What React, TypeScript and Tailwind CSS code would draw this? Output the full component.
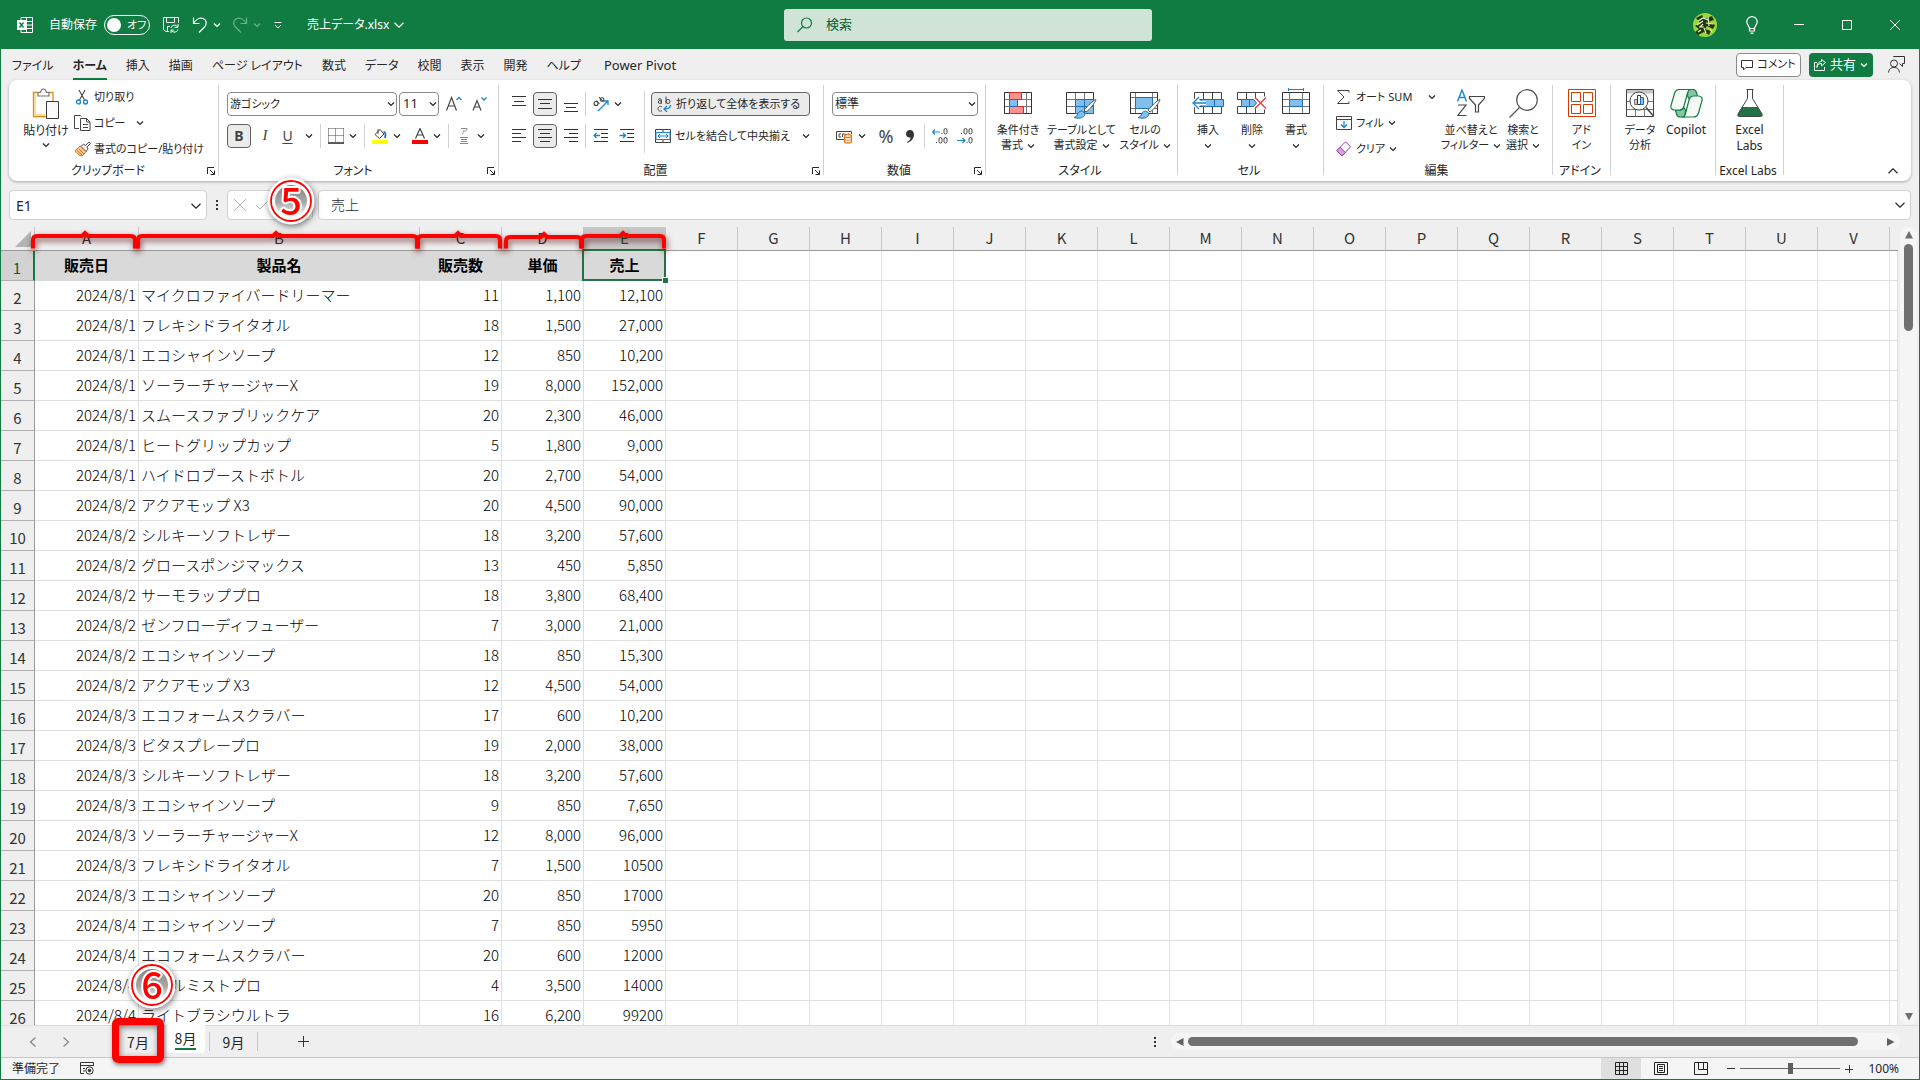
import React from "react";
import clsx from "clsx";

type Row = [string, string, string, string, string];

const ROWS: Row[] = [
  ["2024/8/1", "マイクロファイバードリーマー", "11", "1,100", "12,100"],
  ["2024/8/1", "フレキシドライタオル", "18", "1,500", "27,000"],
  ["2024/8/1", "エコシャインソープ", "12", "850", "10,200"],
  ["2024/8/1", "ソーラーチャージャーX", "19", "8,000", "152,000"],
  ["2024/8/1", "スムースファブリックケア", "20", "2,300", "46,000"],
  ["2024/8/1", "ヒートグリップカップ", "5", "1,800", "9,000"],
  ["2024/8/1", "ハイドロブーストボトル", "20", "2,700", "54,000"],
  ["2024/8/2", "アクアモップ X3", "20", "4,500", "90,000"],
  ["2024/8/2", "シルキーソフトレザー", "18", "3,200", "57,600"],
  ["2024/8/2", "グロースポンジマックス", "13", "450", "5,850"],
  ["2024/8/2", "サーモラッププロ", "18", "3,800", "68,400"],
  ["2024/8/2", "ゼンフローディフューザー", "7", "3,000", "21,000"],
  ["2024/8/2", "エコシャインソープ", "18", "850", "15,300"],
  ["2024/8/2", "アクアモップ X3", "12", "4,500", "54,000"],
  ["2024/8/3", "エコフォームスクラバー", "17", "600", "10,200"],
  ["2024/8/3", "ビタスプレープロ", "19", "2,000", "38,000"],
  ["2024/8/3", "シルキーソフトレザー", "18", "3,200", "57,600"],
  ["2024/8/3", "エコシャインソープ", "9", "850", "7,650"],
  ["2024/8/3", "ソーラーチャージャーX", "12", "8,000", "96,000"],
  ["2024/8/3", "フレキシドライタオル", "7", "1,500", "10500"],
  ["2024/8/3", "エコシャインソープ", "20", "850", "17000"],
  ["2024/8/4", "エコシャインソープ", "7", "850", "5950"],
  ["2024/8/4", "エコフォームスクラバー", "20", "600", "12000"],
  ["2024/8/4", "クールミストプロ", "4", "3,500", "14000"],
  ["2024/8/4", "ライトブラシウルトラ", "16", "6,200", "99200"],
];

const HEADINGS = ["販売日", "製品名", "販売数", "単価", "売上"];
const DATA_COLS = ["A", "B", "C", "D", "E"];
const EMPTY_COLS = "FGHIJKLMNOPQRSTUV".split("");
const MENU = ["ファイル", "ホーム", "挿入", "描画", "ページ レイアウト", "数式", "データ", "校閲", "表示", "開発", "ヘルプ"];

/* ---------- small parts ---------- */

const Chevron = ({ className = "w-2", up = false }: { className?: string; up?: boolean }) => (
  <svg viewBox="0 0 8 8" className={clsx("shrink-0", className)} fill="none" stroke="currentColor" strokeWidth="1.2">
    <path d={up ? "M1 5.5 4 2.5 7 5.5" : "M1 2.5 4 5.5 7 2.5"} vectorEffect="non-scaling-stroke" />
  </svg>
);

const Drop = ({ label }: { label: string }) => (
  <button aria-label={label} className="flex w-[18px] items-center justify-center self-stretch">
    <Chevron />
  </button>
);

const Tool = ({ label, on, wide, children }: { label: string; on?: boolean; wide?: boolean; children: React.ReactNode }) => (
  <button
    aria-label={label}
    className={clsx(
      "flex h-6 shrink-0 items-center justify-center",
      wide ? "w-6" : "w-[17px]",
      on && "rounded border border-[#616161] bg-[#ebebeb]"
    )}
  >
    {children}
  </button>
);

const Sep = () => <span className="mr-[6px] ml-[2px] h-6 w-px shrink-0 bg-[#d1d1d1]" />;

const Launcher = () => (
  <button aria-label="ダイアログを表示" className="h-2 w-2">
    <svg viewBox="0 0 8 8" className="size-2" fill="none" stroke="#262626">
      <path d="M.5 7V.5H7M3 3l4 4M7.5 3.5v4h-4" />
    </svg>
  </button>
);

const Group = ({ title, width, launcher, children }: { title: string; width: string; launcher?: boolean; children: React.ReactNode }) => (
  <>
    <section className={clsx("flex shrink-0 flex-col", width)}>
      <div className="flex h-[83px] text-[11px]">{children}</div>
      <div className="flex h-4 items-center pr-[3px]">
        <span className="flex-1 text-center leading-4 whitespace-nowrap">{title}</span>
        {launcher && <Launcher />}
      </div>
    </section>
    <span className="mt-[5px] h-[90px] w-px shrink-0 bg-[#d1d1d1]" />
  </>
);

const BigButton = ({ icon, lines, width, arrow }: { icon: React.ReactNode; lines: string[]; width: string; arrow?: boolean }) => (
  <button className={clsx("flex shrink-0 flex-col items-center pt-[9px]", width)}>
    <span className="flex h-[33px] items-start">{icon}</span>
    <span className="flex h-4 items-center whitespace-nowrap">{lines[0]}</span>
    <span className="flex h-[15px] items-center gap-1 whitespace-nowrap">
      {lines[1]}
      {arrow && <Chevron />}
    </span>
  </button>
);

const SmallButton = ({ icon, text, arrow }: { icon: React.ReactNode; text: string; arrow?: string }) => (
  <button className="flex h-[26px] items-center whitespace-nowrap">
    <span className="flex w-5 shrink-0 items-center">{icon}</span>
    {text}
    {arrow && <Chevron className={clsx("w-2", arrow)} />}
  </button>
);

const Badge = ({ n, className }: { n: string; className: string }) => (
  <svg viewBox="0 0 48 48" className={clsx("pointer-events-none absolute z-20 size-12 overflow-visible drop-shadow-[1px_2px_3px_rgba(0,0,0,0.5)]", className)}>
    <defs>
      <linearGradient id={`shade${n}`} x1="0" y1="0" x2="0" y2="1">
        <stop offset="0" stopColor="#858585" />
        <stop offset=".55" stopColor="#a8a8a8" />
        <stop offset="1" stopColor="#fff" />
      </linearGradient>
    </defs>
    <circle cx="24" cy="24" r="23.5" fill="#fff" />
    <circle cx="24" cy="24" r="16" fill={`url(#shade${n})`} />
    <circle cx="24" cy="24" r="20" fill="none" stroke="#f00" strokeWidth="1.8" />
    <text
      x="24"
      y="37.5"
      textAnchor="middle"
      fontSize="38"
      fontWeight="500"
      fill="#f00"
      stroke="#fff"
      strokeWidth="4"
      paintOrder="stroke"
      strokeLinejoin="round"
      className="font-['Noto_Sans_CJK_JP',sans-serif]"
    >
      {n}
    </text>
  </svg>
);

/* ---------- icons ---------- */

const Lines = ({ d }: { d: string }) => (
  <svg viewBox="0 0 16 16" className="size-4" fill="none" stroke="#333">
    <path d={d} />
  </svg>
);

const Indent = ({ right }: { right?: boolean }) => (
  <svg viewBox="0 0 16 16" className="size-4" fill="none" stroke="#333">
    <path d="M1 1.5h14M8 5.5h7M8 9.5h7M1 13.5h14" />
    <path d={right ? "M.5 7.5h6M4 5l2.5 2.5L4 10" : "M7 7.5H1M3.500 5 1 7.500 3.500 10"} stroke="#1a86d0" strokeWidth="1.3" />
  </svg>
);

const Paste = () => (
  <svg viewBox="0 0 28 31" className="h-[31px] w-7" fill="none">
    <path d="M1.500 4.500H21v24H1.500z" fill="#fff" stroke="#e08a1e" strokeWidth="1.300" />
    <path d="M3 6v21h10" stroke="#fbdc9a" strokeWidth="2" />
    <path d="M6 8V4.500h2.500C9 2 10 1 11.500 1S14 2 14.500 4.500H17V8z" fill="#fff" stroke="#777" strokeWidth="1.200" />
    <path d="M14.500 13.500h12v17h-12z" fill="#fafafa" stroke="#3a3a3a" />
  </svg>
);

const Cut = () => (
  <svg viewBox="0 0 16 16" className="size-4" fill="none">
    <path d="M5 1l5.500 10M11 1 5.500 11" stroke="#444" strokeWidth="1.100" />
    <circle cx="4.500" cy="13" r="2" stroke="#1a86d0" strokeWidth="1.300" />
    <circle cx="11.500" cy="13" r="2" stroke="#1a86d0" strokeWidth="1.300" />
  </svg>
);

const Copy = () => (
  <svg viewBox="0 0 17 16" className="h-4 w-[17px]" fill="none" stroke="#444">
    <path d="M5 13.500H.5V.5h6l1 1" />
    <path d="M6.500 3.500h6l3.500 3.500v8.500H6.500z" fill="#fff" />
    <path d="M12.500 3.500V7H16M9 9.500h5M9 12.500h5" />
  </svg>
);

const Brush = () => (
  <svg viewBox="0 0 17 16" className="h-4 w-[17px]">
    <path d="M1 9.500 6.500 5l6 5.500L8 15c-3-.5-5.500-2.500-7-5.500z" fill="#fbc98a" stroke="#e0701a" />
    <path d="M3 9.500 8 14M5 8l5 5" stroke="#e0701a" />
    <path d="M7 5.500 9.500 3l2 1.500L15 1l1.500 1.500L13 6l1 2-2 2.500z" fill="#eee" stroke="#555" />
  </svg>
);

const GrowFont = ({ down }: { down?: boolean }) => (
  <svg viewBox="0 0 16 16" className="size-4" fill="none">
    <path d={down ? "M1 14.500 5 4.500l4 10M2.500 11h5" : "M.5 14.500 5.500 1.500l5 13M2.500 10h6.500"} stroke="#444" strokeWidth="1.200" />
    <path d={down ? "M9.500 1.500 12 4l2.500-2.500" : "M10.500 4 13 1.500 15.500 4"} stroke="#1a86d0" strokeWidth="1.300" />
  </svg>
);

const Borders = () => (
  <svg viewBox="0 0 16 16" className="size-4" fill="none" stroke="#444">
    <path d="M.5.5h15M.5 7.500h15M.5.5v14M7.500.5v14M15.500.5v14" strokeDasharray="1 1" />
    <path d="M0 15h16" stroke="#222" strokeWidth="1.500" />
  </svg>
);

const Fill = () => (
  <svg viewBox="0 0 16 16" className="size-4" fill="none">
    <path d="M3 6.500 8 1.500l4 4.500-4.500 4.500z" stroke="#444" />
    <path d="M6 1v5" stroke="#444" />
    <path d="M11.500 3.500c2 .5 2.500 3 1.500 6.500" stroke="#1a6fb8" strokeWidth="1.800" />
    <path d="M0 12h16v4H0z" fill="#ff0" />
  </svg>
);

const FontColor = () => (
  <svg viewBox="0 0 16 16" className="size-4" fill="none">
    <path d="M3.500 10.500 8 .5l4.500 10M5 7h6" stroke="#444" strokeWidth="1.200" />
    <path d="M0 12h16v4H0z" fill="#f00" />
  </svg>
);

const Ruby = () => (
  <svg viewBox="0 0 16 16" className="size-4" fill="none" stroke="#888">
    <path d="M5 .5h6c0 1.500-1 2.500-2 3M8 2c0 2-.5 3-2 4M4 9.500h8M5 11.500h6M5 13.500h6M4 15.500h8" />
  </svg>
);

const Orient = () => (
  <svg viewBox="0 0 16 16" className="size-4" fill="none">
    <g stroke="#444" strokeWidth="1.100">
      <circle cx="3" cy="7.500" r="2" />
      <path d="m3.500 4.500 3 3.500M6 1l4.500 5" />
      <circle cx="9" cy="3.500" r="1.800" />
    </g>
    <path d="M5 15 15 5M11 5h4v4" stroke="#1a86d0" strokeWidth="1.300" />
  </svg>
);

const Wrap = () => (
  <svg viewBox="0 0 15 16" className="h-4 w-[15px]" fill="none">
    <g stroke="#444">
      <path d="M1 3.500c1-1 3.500-1 3.500.8V7.500M9 .5v7" />
      <circle cx="2.800" cy="6" r="1.500" />
      <circle cx="11" cy="5.500" r="2" />
      <path d="M5 11c-2-1.500-4 0-4 1.800s2 3.200 4 1.700" />
    </g>
    <path d="M13.500 9c0 3-2 4-6 4M10 10l-3 3 3 3" stroke="#1a86d0" strokeWidth="1.300" />
  </svg>
);

const Merge = () => (
  <svg viewBox="0 0 16 16" className="size-4" fill="none">
    <path d="M.5 1.500h15v13H.5zM.5 4.500h15M.5 11.500h15M8 1.500v3M8 11.500v3" stroke="#444" />
    <path d="M1 4.500h14v7H1z" fill="#fff" stroke="#1a86d0" />
    <path d="M3 8h10M5 6 3 8l2 2M11 6l2 2-2 2" stroke="#1a86d0" />
  </svg>
);

const Currency = () => (
  <svg viewBox="0 0 17 16" className="h-4 w-[17px]" fill="none">
    <path d="M8 11.500H.5v-8h15V6" stroke="#444" />
    <path d="M5 6H3v3h2M6.500 9V6h3v1M12 6h1" stroke="#444" />
    <path d="M8.500 8v5.500c0 2 7 2 7 0V8" fill="#fff" stroke="#e07818" strokeWidth="1.300" />
    <ellipse cx="12" cy="8" rx="3.500" ry="1.500" fill="#fff" stroke="#e07818" strokeWidth="1.300" />
    <path d="M8.500 10.800c0 2 7 2 7 0" stroke="#e07818" />
  </svg>
);

const Decimal = ({ less }: { less?: boolean }) => (
  <svg viewBox="0 0 16 16" className="size-4" fill="none" stroke="#444">
    {less ? (
      <>
        <rect x="7" y=".5" width="3" height="5.500" rx="1.500" />
        <rect x="12" y=".5" width="3" height="5.500" rx="1.500" />
        <rect x="12" y="9.500" width="3" height="5.500" rx="1.500" />
        <path d="M4 5.500h1M9.500 14.500h1" />
        <path d="M0 12.500h8M5.500 10 8 12.500 5.500 15" stroke="#1a86d0" strokeWidth="1.200" />
      </>
    ) : (
      <>
        <rect x="12" y=".5" width="3" height="5.500" rx="1.500" />
        <rect x="7" y="9.500" width="3" height="5.500" rx="1.500" />
        <rect x="12" y="9.500" width="3" height="5.500" rx="1.500" />
        <path d="M9.500 5.500h1M4 14.500h1" />
        <path d="M8 4H.5M3 1.500.5 4 3 6.500" stroke="#1a86d0" strokeWidth="1.200" />
      </>
    )}
  </svg>
);

const GRID = "M.5 3.500h27v21H.5zM.5 10.500h27M.5 17.500h27";

const CondFormat = () => (
  <svg viewBox="0 0 28 30" className="h-[30px] w-7" fill="none">
    <path d={GRID + "M5.500 3.500v21M22.500 3.500v21"} stroke="#777" />
    <path d="M.5 3.500h27v21H.5z" stroke="#333" />
    <path d="M5.500 3.500h12v7h-12zM5.500 17.500h14v7h-14z" fill="#ff9090" stroke="#d92b20" />
    <path d="M5.500 10.500h8v7h-8z" fill="#83beec" stroke="#1a6fb8" />
  </svg>
);

const BrushOver = () => (
  <>
    <path d="M30 10.500c-2.500.5-9 7-12 10.500l2 2c3.500-2 9.500-9.500 10-12.500z" fill="#fff" stroke="#555" />
    <path d="M8 28.500c3-.5 3-3 4.500-5s5-1.500 6 .5-1 4.500-4 5-5 0-6.500-.5z" fill="#83beec" stroke="#1a6fb8" />
  </>
);

const TableFormat = () => (
  <svg viewBox="0 0 31 30" className="h-[30px] w-[31px]" fill="none">
    <path d={GRID + "M9.500 3.500v21M18.500 3.500v21"} stroke="#777" />
    <path d="M.5 3.500h27v21H.5z" stroke="#333" />
    <path d="M9.500 10.500h18v14h-18z" fill="#83beec" stroke="#1a6fb8" />
    <path d="M9.500 17.500h18M18.500 10.500v14" stroke="#1a6fb8" />
    <BrushOver />
  </svg>
);

const CellStyle = () => (
  <svg viewBox="0 0 31 30" className="h-[30px] w-[31px]" fill="none">
    <path d="M.5 3.500h27v21H.5zM.5 8.500h27M.5 19.500h27M5.500 3.500v21M22.500 3.500v21" stroke="#777" />
    <path d="M.5 3.500h27v21H.5z" stroke="#333" />
    <path d="M5.500 8.500h17v11h-17z" fill="#83beec" stroke="#1a6fb8" />
    <BrushOver />
  </svg>
);

const InsertCells = () => (
  <svg viewBox="0 0 32 30" className="h-[30px] w-8" fill="none">
    <path d="M2.500 3.500h27v21h-27zM2.500 10.500h27M2.500 17.500h27M11.500 3.500v21M20.500 3.500v21" stroke="#444" />
    <path d="M9 10.500h22.500v7H9z" fill="#83beec" stroke="#1a6fb8" />
    <path d="M22.500 10.500v7" stroke="#1a6fb8" />
    <path d="M14 14H1M7 8l-6 6 6 6" stroke="#fff" strokeWidth="4" />
    <path d="M14 14H1M7 8l-6 6 6 6" stroke="#1a86d0" strokeWidth="1.300" />
  </svg>
);

const DeleteCells = () => (
  <svg viewBox="0 0 30 30" className="h-[30px] w-[30px]" fill="none">
    <path d="M.5 10.500v-7h27v4M.5 17.500v7h27v-4M.5 10.500h16M.5 17.500h16M9.500 3.500v7M18.500 3.500v6M9.500 17.500v7M18.500 18v6" stroke="#444" />
    <path d="M4.500 10.500h12l3 3.500-3 3.500h-12z" fill="#83beec" stroke="#1a6fb8" />
    <path d="M12.500 10.500v7" stroke="#1a6fb8" />
    <path d="m18 8.500 11 11M29 8.500l-11 11" stroke="#e8413c" strokeWidth="1.400" />
  </svg>
);

const FormatCells = () => (
  <svg viewBox="0 0 28 30" className="h-[30px] w-7 overflow-visible" fill="none">
    <path d="M6.500.5h15M6.500-1v3M21.500-1v3" stroke="#1a86d0" />
    <path d={GRID + "M7.500 3.500v21M20.500 3.500v21"} stroke="#777" />
    <path d="M.5 3.500h27v21H.5z" stroke="#333" />
    <path d="M7.500 10.500h13v7h-13z" fill="#83beec" stroke="#1a6fb8" />
  </svg>
);

const SortFilter = () => (
  <svg viewBox="0 0 28 30" className="h-[30px] w-7" fill="none">
    <path d="M.5 12.500 5 1l4.500 11.500M2 8.500h6" stroke="#1a86d0" strokeWidth="1.400" />
    <path d="M1 16h8L.8 26.500H9.500" stroke="#444" strokeWidth="1.200" />
    <path d="M12.500 7.500h15v2L21.500 16v7h-3v-7l-6-6.500z" stroke="#444" strokeWidth="1.200" />
  </svg>
);

const Find = () => (
  <svg viewBox="0 0 29 30" className="h-[30px] w-[29px]" fill="none" stroke="#555" strokeWidth="1.200">
    <circle cx="18" cy="11" r="10.300" />
    <path d="M10.500 18.500.5 28.500" />
  </svg>
);

const AddIns = () => (
  <svg viewBox="0 0 28 30" className="h-[30px] w-7" fill="none" stroke="#d83b01">
    <path d="M.5.5h27v27H.5zM3.500 3.500h9v9h-9zM15.500 3.500h9v9h-9zM3.500 15.500h9v9h-9zM15.500 15.500h9v9h-9z" />
  </svg>
);

const Analyze = () => (
  <svg viewBox="0 0 28 30" className="h-[30px] w-7" fill="none">
    <path d="M.5.5h27v27H.5z" fill="#fafafa" stroke="#444" />
    <path d="M1 1h26v3.500H1z" fill="#c8c8c8" />
    <path d="M1 12.500h26M1 20.500h26M9.500 20.500v7M18.500 20.500v7" stroke="#777" />
    <circle cx="13" cy="12" r="9" fill="#fff" stroke="#444" />
    <path d="M20 18.500 27.500 27" stroke="#444" strokeWidth="1.500" />
    <path d="M8.500 10.500h3v5h-3z" fill="#c8c8c8" stroke="#777" />
    <path d="M11.500 6.500h3v9h-3z" fill="#fff" stroke="#333" />
    <path d="M14.500 8.500h3v7h-3z" fill="#83beec" stroke="#1a6fb8" />
  </svg>
);

const Copilot = () => (
  <svg viewBox="0 1 33 30" className="h-[30px] w-[33px]" fill="none" stroke="#128044" strokeWidth="1.200" strokeLinejoin="round">
    <path d="M18 1.500h5c2 0 3 1 3.500 3l1 4H23c-2 0-3 1-3.500 3L17.500 8z" fill="#8ac5a2" />
    <path d="M15 29h-5c-2 0-3-1-3.500-3l-1-4H10c2 0 3-1 3.500-3l2 3z" fill="#8ac5a2" />
    <path d="M9.500 1.500H21c-2 0-3 1.500-3.500 3.500L14 18c-.7 2.500-2 4-4.500 4H4.500C1.500 22 .5 20 1 17.500L4.500 5.500c.7-2.500 2.500-4 5-4z" fill="#f5faf6" />
    <path d="M23.500 29H12c2 0 3-1.500 3.500-3.500L19 12c.7-2.500 2-4 4.500-4h5c3 0 4 2 3.500 4.500L28.500 25c-.7 2.500-2.500 4-5 4z" fill="#f5faf6" />
  </svg>
);

const Flask = () => (
  <svg viewBox="0 1 26 30" className="h-[30px] w-[26px]" fill="none">
    <path d="M5 19h16l4 7c.7 1.500 0 2.500-1.500 2.500h-21C1 28.500.3 27.500 1 26z" fill="#217346" />
    <path d="M9.500 1.500h7M10.500 1.500v9L1 26c-.7 1.500 0 2.500 1.500 2.500h21c1.500 0 2.200-1 1.500-2.500l-9.500-15.500v-9" stroke="#444" />
  </svg>
);

/* ---------- sections ---------- */

const TitleBar = () => (
  <header className="flex h-[49px] shrink-0 items-center bg-[#107c41] pt-[1px] text-xs text-white">
    <div className="flex flex-1 items-center pl-4">
      <svg viewBox="0 0 16 16" className="size-4" fill="none" stroke="#fff">
        <path d="M4 3V.5h11.500v15H4V13M9.500.5v15M9 4.500h6.500M9 8h6.500M9 11.500h6.500" />
        <path d="M0 3h9v10H0z" fill="#fff" stroke="none" />
        <path d="m2.500 5.500 4 5M6.500 5.500l-4 5" stroke="#107c41" strokeWidth="1.400" />
      </svg>
      <span className="ml-4 whitespace-nowrap">自動保存</span>
      <button role="switch" aria-checked="false" aria-label="自動保存" className="ml-[7px] flex h-5 w-[46px] items-center rounded-full border border-white pl-[2px]">
        <span className="size-[14px] rounded-full bg-white" />
        <span className="ml-[6px] text-[11px] whitespace-nowrap">オフ</span>
      </button>
      <button aria-label="保存" className="ml-[13px]">
        <svg viewBox="0 0 16 16" className="size-4" fill="none" stroke="#fff">
          <path d="M6 14.500H3l-2.500-2V.5h15V6M3.500.5v5h8v-5M4.500 14.500v-5H7" />
          <path d="M8 11c.5-3 5-4 6.500-1M15 7v3.500h-3.500M15 12.500c-1 3-5 3.500-6.500 1M8 16v-3h3" />
        </svg>
      </button>
      <button aria-label="元に戻す" className="ml-[13px]">
        <svg viewBox="0 0 16 16" className="size-4" fill="none" stroke="#fff" strokeWidth="1.200">
          <path d="M1.500.5v6h6M1.500 6.500C4 2 8 .5 11 1.500c4 1.500 4 6 1.500 8.500L7 15.500" />
        </svg>
      </button>
      <Drop label="元に戻すの一覧" />
      <button aria-label="やり直し" className="ml-[6px] opacity-40">
        <svg viewBox="0 0 16 16" className="size-4" fill="none" stroke="#fff" strokeWidth="1.200">
          <path d="M14.500.5v6h-6M14.500 6.500C12 2 8 .5 5 1.500c-4 1.500-4 6-1.500 8.500L9 15.500" />
        </svg>
      </button>
      <span className="flex opacity-40">
        <Drop label="やり直しの一覧" />
      </span>
      <button aria-label="クイック アクセス ツール バーのユーザー設定" className="ml-2">
        <svg viewBox="0 0 8 8" className="size-2" fill="none" stroke="#fff">
          <path d="M.5 1.500h7M1 4l3 3 3-3" />
        </svg>
      </button>
      <button className="ml-[25px] flex items-center gap-1 whitespace-nowrap">
        売上データ.xlsx
        <Chevron className="w-3" />
      </button>
    </div>
    <label className="flex h-8 w-[368px] items-center rounded-[3px] bg-[#cfe3d7] pl-[13px]">
      <svg viewBox="0 0 16 16" className="mr-[13px] size-4 shrink-0" fill="none" stroke="#107c41" strokeWidth="1.200">
        <circle cx="9.500" cy="6" r="5" />
        <path d="M6 9.500.5 15" />
      </svg>
      <input aria-label="検索" placeholder="検索" className="w-full bg-transparent text-[13px] outline-none placeholder:text-[#0c5c31]" />
    </label>
    <div className="flex flex-1 items-center justify-end">
      <button aria-label="アカウント" className="mr-[29px]">
        <svg viewBox="0 0 24 24" className="size-6">
          <circle cx="12" cy="12" r="12" fill="#9fd43a" />
          <path d="M3 5l6-3 2 4 8-3 2 4-6 2 7 3-2 4-6-3-2 3 6 2-2 4-5-3-6 3-3-3 4-3-4-3 5-3z" fill="#20380f" />
          <path d="M5 8l5-3 5 2M4 12l6-4M6 14h5M15 4l1 9M13 10l7 1M10 11l-3 3M8 17l-3 2M11 15l2 5M17 16l2 3" stroke="#e9f5c8" strokeWidth="1.200" fill="none" />
        </svg>
      </button>
      <button aria-label="ヒント" className="mr-[36px]">
        <svg viewBox="0 0 12 18" className="h-[18px] w-3" fill="none" stroke="#fff" strokeWidth="1.200">
          <path d="M3.500 12.500C3.500 10 .8 9 .8 5.800a5.200 5.200 0 0 1 10.400 0c0 3.200-2.700 4.200-2.700 6.700zM3.500 12.500v2.500h5v-2.500M4.500 17.200h3" />
        </svg>
      </button>
      <button aria-label="最小化" className="mr-[38px]">
        <svg viewBox="0 0 10 10" className="size-[10px]" stroke="#fff"><path d="M0 4.500h10" /></svg>
      </button>
      <button aria-label="最大化" className="mr-[38px]">
        <svg viewBox="0 0 10 10" className="size-[10px]" stroke="#fff" fill="none"><path d="M.5.5h9v9h-9z" /></svg>
      </button>
      <button aria-label="閉じる" className="mr-[19px]">
        <svg viewBox="0 0 10 10" className="size-[10px]" stroke="#fff"><path d="M0 0l10 10M10 0 0 10" /></svg>
      </button>
    </div>
  </header>
);

const MenuBar = () => (
  <nav className="flex h-[31px] shrink-0 items-center justify-between pr-[14px] pl-[11px]">
    <div className="flex items-center gap-[19px] pt-1">
      {MENU.map((m) => (
        <button
          key={m}
          className={clsx("h-[26px] border-b-2 whitespace-nowrap", m === "ホーム" ? "border-[#107c41] font-bold" : "border-transparent")}
        >
          {m}
        </button>
      ))}
      <button className="ml-1 h-[26px] border-b-2 border-transparent text-[13px] whitespace-nowrap">Power Pivot</button>
    </div>
    <div className="flex items-center">
      <button className="flex h-6 w-[65px] items-center justify-center gap-1 rounded border border-[#8a8a8a] bg-white text-[11px] whitespace-nowrap">
        <svg viewBox="0 0 12 12" className="size-3" fill="none" stroke="#333"><path d="M.5 1.500h11v7H5L2.500 11V8.500h-2z" /></svg>
        コメント
      </button>
      <button className="ml-2 flex h-6 w-16 items-center justify-center gap-1 rounded bg-[#107c41] text-[13px] whitespace-nowrap text-white">
        <svg viewBox="0 0 12 12" className="size-3" fill="none" stroke="#fff">
          <path d="M3 3.500H.5v8h10V8M3 8.500C3 5.500 5 4.500 7.500 4.500V7L11.500 3.500 7.500.5v2C4.500 2.500 3 5 3 8.500z" />
        </svg>
        共有
        <Chevron />
      </button>
      <button aria-label="プレゼンス" className="ml-[15px]">
        <svg viewBox="0 0 17 17" className="size-[17px]" fill="none" stroke="#333">
          <circle cx="6" cy="7.500" r="3.500" />
          <path d="M.5 16.500c.5-4 3-5 5.500-5s5 1 5.500 5M5.500 1V.5h11v7h-2v3l-3-3" />
        </svg>
      </button>
    </div>
  </nav>
);

const Ribbon = () => (
  <div className="mx-2 flex h-[101px] shrink-0 rounded-lg bg-white shadow-[0_1px_3px_rgba(0,0,0,0.3)]">
    <Group title="クリップボード" width="w-[209px]" launcher>
      <button className="ml-[14px] flex w-[46px] flex-col items-center pt-[8px]">
        <Paste />
        <span className="mt-1 flex h-4 items-center text-xs whitespace-nowrap">貼り付け</span>
        <Chevron className="mt-[2px] w-2" />
      </button>
      <div className="ml-[5px] flex flex-col pt-1">
        <SmallButton icon={<Cut />} text="切り取り" />
        <SmallButton icon={<Copy />} text="コピー" arrow="ml-[10px]" />
        <SmallButton icon={<Brush />} text="書式のコピー/貼り付け" />
      </div>
    </Group>

    <Group title="フォント" width="w-[279px]" launcher>
      <div className="flex flex-col gap-2 pt-3 pl-2">
        <div className="flex">
          <div className="relative mr-[2px] flex h-6 w-[170px] items-center">
            <select aria-label="フォント" className="size-full appearance-none rounded border border-[#8a8a8a] bg-white pl-[2px]">
              <option>游ゴシック</option>
            </select>
            <Chevron className="pointer-events-none absolute right-[2px] w-2" />
          </div>
          <div className="relative flex h-6 w-10 items-center">
            <select aria-label="フォント サイズ" className="size-full appearance-none rounded border border-[#8a8a8a] bg-white pl-[3px] text-[13px]">
              <option>11</option>
            </select>
            <Chevron className="pointer-events-none absolute right-[2px] w-2" />
          </div>
          <span className="w-[3px]" />
          <Tool label="フォント サイズの拡大" wide><GrowFont /></Tool>
          <span className="w-[2px]" />
          <Tool label="フォント サイズの縮小" wide><GrowFont down /></Tool>
        </div>
        <div className="flex items-center">
          <Tool label="太字" on wide><b className="text-sm text-[#444]">B</b></Tool>
          <span className="w-[2px]" />
          <Tool label="斜体" wide><i className="font-['Liberation_Serif',serif] text-[15px] text-[#444]">I</i></Tool>
          <span className="w-[2px]" />
          <Tool label="下線"><u className="text-sm text-[#444] underline-offset-2">U</u></Tool>
          <span className="w-1" />
          <Drop label="下線の種類" />
          <Sep />
          <Tool label="罫線"><Borders /></Tool>
          <Drop label="罫線の種類" />
          <Sep />
          <Tool label="塗りつぶしの色"><Fill /></Tool>
          <Drop label="塗りつぶしの色の一覧" />
          <span className="w-[5px]" />
          <Tool label="フォントの色"><FontColor /></Tool>
          <Drop label="フォントの色の一覧" />
          <Sep />
          <Tool label="ふりがな"><Ruby /></Tool>
          <Drop label="ふりがなの設定" />
        </div>
      </div>
    </Group>

    <Group title="配置" width="w-[324px]" launcher>
      <div className="flex w-[145px] flex-col gap-2 pt-3 pl-2">
        <div className="flex">
          <div className="flex gap-[2px]">
            <Tool label="上揃え" wide><Lines d="M1 .5h14M3 5.500h10M1 9.500h14" /></Tool>
            <Tool label="上下中央揃え" on wide><Lines d="M1 3.500h14M3 7.500h10M1 12.500h14" /></Tool>
            <Tool label="下揃え" wide><Lines d="M1 7.500h14M3 11.500h10M1 15.500h14" /></Tool>
          </div>
          <Sep />
          <Tool label="方向"><Orient /></Tool>
          <Drop label="方向の一覧" />
        </div>
        <div className="flex">
          <div className="flex gap-[2px]">
            <Tool label="左揃え" wide><Lines d="M1 1.500h14M1 5.500h9M1 9.500h14M1 13.500h9" /></Tool>
            <Tool label="中央揃え" on wide><Lines d="M1 1.500h14M3 5.500h10M1 9.500h14M3 13.500h10" /></Tool>
            <Tool label="右揃え" wide><Lines d="M1 1.500h14M6 5.500h9M1 9.500h14M6 13.500h9" /></Tool>
          </div>
          <Sep />
          <Tool label="インデントを減らす"><Indent /></Tool>
          <span className="w-[9px]" />
          <Tool label="インデントを増やす"><Indent right /></Tool>
        </div>
      </div>
      <span className="mt-[11px] mr-[6px] h-[62px] w-px bg-[#d1d1d1]" />
      <div className="flex flex-col gap-2 pt-3">
        <button className="flex h-6 w-[159px] items-center gap-1 rounded border border-[#616161] bg-[#ebebeb] pl-[5px] whitespace-nowrap">
          <Wrap />
          折り返して全体を表示する
        </button>
        <div className="flex h-6 w-[164px] items-center justify-between">
          <button className="flex items-center gap-1 pl-1 whitespace-nowrap">
            <Merge />
            セルを結合して中央揃え
          </button>
          <Drop label="結合の種類" />
        </div>
      </div>
    </Group>

    <Group title="数値" width="w-[161px]" launcher>
      <div className="flex flex-col gap-2 pt-3 pl-2">
        <div className="relative flex h-6 w-[146px] items-center">
          <select aria-label="表示形式" className="size-full appearance-none rounded border border-[#8a8a8a] bg-white pl-[2px] text-xs">
            <option>標準</option>
          </select>
          <Chevron className="pointer-events-none absolute right-[2px] w-2" />
        </div>
        <div className="flex items-center pl-1">
          <Tool label="会計表示形式"><Currency /></Tool>
          <Drop label="通貨の一覧" />
          <span className="w-[3px]" />
          <Tool label="パーセント スタイル" wide><span className="text-lg text-[#444]">%</span></Tool>
          <Tool label="桁区切りスタイル" wide>
            <svg viewBox="0 0 9 13" className="h-[13px] w-[9px]" fill="#333">
              <path d="M4 0c2.500 0 4 2 4 4.500C8 8.500 5 11.500 1.500 13L1 12c2-1 3.500-2.500 3.500-4.500C2 8 0 6.500 0 4s1.800-4 4-4z" />
            </svg>
          </Tool>
          <Sep />
          <Tool label="小数点以下の表示桁数を増やす"><Decimal /></Tool>
          <span className="w-2" />
          <Tool label="小数点以下の表示桁数を減らす"><Decimal less /></Tool>
        </div>
      </div>
    </Group>

    <Group title="スタイル" width="w-[191px]">
      <div className="flex w-full justify-between px-1">
        <BigButton icon={<CondFormat />} lines={["条件付き", "書式"]} width="w-14" arrow />
        <BigButton icon={<TableFormat />} lines={["テーブルとして", "書式設定"]} width="w-[68px]" arrow />
        <BigButton icon={<CellStyle />} lines={["セルの", "スタイル"]} width="w-14" arrow />
      </div>
    </Group>

    <Group title="セル" width="w-[145px]">
      <div className="flex pl-2">
        <BigButton icon={<InsertCells />} lines={["挿入", ""]} width="w-11" arrow />
        <BigButton icon={<DeleteCells />} lines={["削除", ""]} width="w-11" arrow />
        <BigButton icon={<FormatCells />} lines={["書式", ""]} width="w-11" arrow />
      </div>
    </Group>

    <Group title="編集" width="w-[228px]">
      <div className="flex w-[118px] flex-col pt-1 pl-3">
        <SmallButton
          icon={<svg viewBox="0 0 14 14" className="size-[14px]" fill="none" stroke="#444"><path d="M13 2.500V.5H1.500L8 7l-6.500 6.500H13v-2" /></svg>}
          text="オート SUM"
          arrow="ml-4"
        />
        <SmallButton
          icon={
            <svg viewBox="0 0 16 14" className="h-[14px] w-4" fill="none" stroke="#444">
              <path d="M.5.5h15v13H.5zM.5 3.500h15" />
              <path d="M8 5v6.500M5 8.500l3 3 3-3" stroke="#1a86d0" strokeWidth="1.300" />
            </svg>
          }
          text="フィル"
          arrow="ml-1"
        />
        <SmallButton
          icon={
            <svg viewBox="0 0 16 16" className="size-4" fill="#fff" stroke="#a03ca8">
              <path d="M.8 9.500 9.500.8l5 5L6 15z" />
              <path d="M.8 9.500 4 6.200 9.300 11.500 6 15z" fill="#d9a0de" />
            </svg>
          }
          text="クリア"
          arrow="ml-1"
        />
      </div>
      <BigButton icon={<SortFilter />} lines={["並べ替えと", "フィルター"]} width="w-[58px]" arrow />
      <BigButton icon={<Find />} lines={["検索と", "選択"]} width="w-[46px]" arrow />
    </Group>

    <Group title="アドイン" width="w-[57px]">
      <BigButton icon={<AddIns />} lines={["アド", "イン"]} width="w-full" />
    </Group>

    <Group title="" width="w-[104px]">
      <BigButton icon={<Analyze />} lines={["データ", "分析"]} width="w-[58px]" />
      <BigButton icon={<Copilot />} lines={["Copilot", ""]} width="w-[34px] text-xs" />
    </Group>

    <Group title="Excel Labs" width="w-[67px]">
      <BigButton icon={<Flask />} lines={["Excel", "Labs"]} width="w-full text-xs" />
    </Group>

    <button aria-label="リボンを折りたたむ" className="mr-3 mb-1 ml-auto self-end">
      <Chevron className="w-3" up />
    </button>
  </div>
);

const FormulaBar = () => (
  <div className="mx-2 mt-[9px] flex h-[30px] shrink-0 items-stretch">
    <div className="flex w-[198px] items-center rounded border border-[#d1d1d1] bg-white pt-[2px] pr-1 pl-[6px]">
      <input aria-label="名前ボックス" defaultValue="E1" className="w-full min-w-0 bg-transparent text-sm outline-none" />
      <Chevron className="w-3" />
    </div>
    <svg viewBox="0 0 20 30" className="w-5 shrink-0" fill="#333">
      <path d="M9 10h2v2H9zM9 14h2v2H9zM9 18h2v2H9z" />
    </svg>
    <div className="relative flex w-[86px] items-center rounded border border-[#d1d1d1] bg-white pl-[6px]">
      <button aria-label="キャンセル">
        <svg viewBox="0 0 12 12" className="size-3" stroke="#b5b5b5"><path d="M0 0l12 12M12 0 0 12" /></svg>
      </button>
      <button aria-label="入力" className="ml-[10px]">
        <svg viewBox="0 0 12 12" className="size-3" fill="none" stroke="#b5b5b5"><path d="M0 6l4 4 8-8" /></svg>
      </button>
      <button aria-label="関数の挿入" className="ml-4 font-['Liberation_Serif',serif] text-sm italic">fx</button>
      <Badge n="5" className="-top-[14px] left-[39px]" />
    </div>
    <div className="ml-[5px] flex flex-1 items-center rounded border border-[#d1d1d1] bg-white pr-1 pl-3">
      <input
        aria-label="数式バー"
        defaultValue="売上"
        className="w-full bg-transparent pb-[3px] font-['Noto_Sans_CJK_JP',sans-serif] text-sm font-light outline-none"
      />
      <Chevron className="w-3" />
    </div>
  </div>
);

// [left foot, right foot, tip, top edge], measured from the first row header
const BRACES = [
  [32, 134, 84, 9],
  [137, 416, 275, 9],
  [417, 499, 457, 9],
  [505, 580, 543, 10],
  [581, 663, 622, 9],
];

const Braces = () => (
  <svg viewBox="0 0 680 30" className="pointer-events-none absolute top-0 left-0 z-10 h-[30px] w-[680px] overflow-visible drop-shadow-[1px_3px_3px_rgba(90,0,0,0.7)]" fill="none" stroke="#f00" strokeWidth="4">
    {BRACES.map(([l, r, t, y]) => (
      <path key={l} d={`M${l} 21.500V${y + 4}q0-4 4-4H${t - 3}L${t} ${y - 3}l3 3H${r - 4}q4 0 4 4V21.500`} />
    ))}
  </svg>
);

const COL_WIDTHS = ["w-[34px]", "w-[104px]", "w-[281px]", "w-[82px]", "w-[82px]", "w-[82px]"];

const cell = "h-[30px] border-r border-b p-0 pb-[2px] leading-5 whitespace-nowrap";
const rowHead = "h-[30px] border-b border-b-[#b0b0b0] p-0 pt-1 leading-5 font-normal";
const colHead = "h-6 border-r border-b border-r-[#c6c6c6] border-b-[#999] p-0 pb-[2px] leading-5 font-normal";

const Sheet = () => (
  <div className="mt-[7px] flex min-h-0 flex-1">
    <div className="relative min-w-0 flex-1 overflow-hidden">
      <Braces />
      <table className="w-full table-fixed border-separate border-spacing-0 bg-white font-['Noto_Sans_CJK_JP',sans-serif] text-[15px] font-light text-black [font-feature-settings:normal]">
        <colgroup>
          {COL_WIDTHS.map((w, i) => (
            <col key={i} className={w} />
          ))}
          {EMPTY_COLS.map((c) => (
            <col key={c} className="w-[72px]" />
          ))}
          <col />
        </colgroup>
        <thead>
          <tr className="bg-[#efefef]">
            <th className="h-6 border-r border-b border-r-[#c6c6c6] border-b-[#999] p-0">
              <svg viewBox="0 0 16 16" className="mr-[3px] ml-auto size-4" fill="#b4b4b4"><path d="M16 0v16H0z" /></svg>
            </th>
            {[...DATA_COLS, ...EMPTY_COLS].map((c) => (
              <th key={c} scope="col" className={clsx(colHead, c === "E" ? "bg-[#c8c8c8] text-[#0e5c32]" : "text-[#333]")}>
                {c}
              </th>
            ))}
            <th className="h-6 border-b border-b-[#999] p-0" />
          </tr>
        </thead>
        <tbody>
          <tr>
            <th scope="row" className={clsx(rowHead, "border-r-2 border-r-[#107c41] bg-[#d2d2d2] text-[#0e5c32]")}>1</th>
            {HEADINGS.map((h, i) => (
              <td key={h} className={clsx(cell, "border-[#d9d9d9] bg-[#d9d9d9] text-center font-bold", i === 4 && "relative")}>
                {h}
                {i === 4 && (
                  <span className="absolute -top-[2px] -right-[1px] -bottom-[1px] -left-[2px] border-2 border-[#217346]">
                    <span className="absolute -right-[4px] -bottom-[4px] size-[6px] border-t border-l border-white bg-[#217346]" />
                  </span>
                )}
              </td>
            ))}
            {EMPTY_COLS.map((c) => (
              <td key={c} className={clsx(cell, "border-[#e0e0e0]")} />
            ))}
            <td className={clsx(cell, "border-[#e0e0e0]")} />
          </tr>
          {ROWS.map((row, r) => (
            <tr key={r}>
              <th scope="row" className={clsx(rowHead, "border-r border-r-[#999] bg-[#efefef] text-[#333]")}>{r + 2}</th>
              {row.map((v, i) => (
                <td key={i} className={clsx(cell, "border-[#e0e0e0]", i === 1 ? "pl-[2px] text-left" : "pr-[2px] text-right")}>
                  {v}
                </td>
              ))}
              {EMPTY_COLS.map((c) => (
                <td key={c} className={clsx(cell, "border-[#e0e0e0]")} />
              ))}
              <td className={clsx(cell, "border-[#e0e0e0]")} />
            </tr>
          ))}
        </tbody>
      </table>
    </div>
    <div className="mr-[2px] ml-[2px] flex w-[17px] flex-col items-center rounded-lg bg-[#f5f5f5] py-1">
      <button aria-label="上へスクロール">
        <svg viewBox="0 0 8 8" className="size-2" fill="#707070"><path d="M4 0l4 7.500H0z" /></svg>
      </button>
      <span className="mt-[5px] h-[87px] w-[9px] rounded-full bg-[#707070]" />
      <button aria-label="下へスクロール" className="mt-auto">
        <svg viewBox="0 0 8 8" className="size-2" fill="#707070"><path d="M4 7.500 8 0H0z" /></svg>
      </button>
    </div>
  </div>
);

const SheetTabs = () => (
  <div className="flex h-8 shrink-0 items-stretch border-t border-[#dcdcdc] font-['Noto_Sans_CJK_JP',sans-serif] text-sm">
    <button aria-label="前のシート" className="ml-7 text-[#888]">
      <svg viewBox="0 0 8 10" className="h-[10px] w-2" fill="none" stroke="currentColor" strokeWidth="1.300"><path d="M6.500.5 1.500 5l5 4.500" /></svg>
    </button>
    <button aria-label="次のシート" className="ml-[25px] text-[#888]">
      <svg viewBox="0 0 8 10" className="h-[10px] w-2" fill="none" stroke="currentColor" strokeWidth="1.300"><path d="M1.500.5l5 4.500-5 4.500" /></svg>
    </button>
    <button className="relative ml-[42px] w-[52px] whitespace-nowrap">
      7月
      <span className="absolute -top-2 left-0 z-10 h-[45px] w-[52px] rounded-md border-[7px] border-[#f00] shadow-[1px_2px_4px_rgba(0,0,0,0.5),inset_1px_2px_6px_rgba(0,0,0,0.5)]" />
      <Badge n="6" className="-top-[65px] left-4" />
    </button>
    <button className="-mt-px mb-1 ml-[2px] flex w-[39px] items-center justify-center rounded-b bg-white">
      <span className="border-b-2 border-[#107c41] leading-5 whitespace-nowrap">8月</span>
    </button>
    <button className="my-[6px] ml-1 w-[49px] border-x border-[#c6c6c6] leading-4 whitespace-nowrap">9月</button>
    <button aria-label="新しいシート" className="ml-10">
      <svg viewBox="0 0 12 12" className="size-3" fill="none" stroke="#333"><path d="M5.500 0v11M0 5.500h11" /></svg>
    </button>
    <div className="ml-auto flex items-center pr-[19px]">
      <svg viewBox="0 0 2 12" className="mr-[15px] h-3 w-[2px]" fill="#333"><path d="M0 1h2v2H0zM0 5h2v2H0zM0 9h2v2H0z" /></svg>
      <div className="flex h-[17px] w-[729px] items-center rounded-lg bg-[#f5f5f5] px-[5px]">
        <button aria-label="左へスクロール">
          <svg viewBox="0 0 8 8" className="size-2" fill="#606060"><path d="M0 4l7.500-4v8z" /></svg>
        </button>
        <span className="ml-1 h-[9px] w-[670px] rounded-full bg-[#707070]" />
        <button aria-label="右へスクロール" className="ml-auto">
          <svg viewBox="0 0 8 8" className="size-2" fill="#606060"><path d="M7.500 4 0 0v8z" /></svg>
        </button>
      </div>
    </div>
  </div>
);

const StatusBar = () => (
  <footer className="flex h-[22px] shrink-0 items-center border-t border-[#c6c6c6] bg-[#f5f5f5]">
    <span className="ml-[11px] whitespace-nowrap">準備完了</span>
    <button aria-label="マクロの記録" className="ml-5">
      <svg viewBox="0 0 14 13" className="h-[13px] w-[14px]" fill="none" stroke="#333">
        <path d="M4 11.500H.5V.5h13V4M.5 3.500h13M3 6.500h2M3 9h2" />
        <circle cx="9.500" cy="8.500" r="3.700" />
        <circle cx="9.500" cy="8.500" r="1.300" fill="#333" />
      </svg>
    </button>
    <div className="ml-auto flex items-center self-stretch">
      <button aria-label="標準" className="flex h-full w-10 items-center justify-center bg-[#dfdfdf]">
        <svg viewBox="0 0 13 13" className="size-[13px]" fill="none" stroke="#222"><path d="M.5.5h12v12H.5zM.5 4.500h12M.5 8.500h12M4.500.5v12M8.500.5v12" /></svg>
      </button>
      <button aria-label="ページ レイアウト" className="flex h-full w-10 items-center justify-center">
        <svg viewBox="0 0 14 13" className="h-[13px] w-[14px]" fill="none" stroke="#222"><path d="M.5.5h13v12H.5zM3.500 2.500h7v8h-7zM5 4.500h4M5 6.500h4M5 8.500h4" /></svg>
      </button>
      <button aria-label="改ページ プレビュー" className="flex h-full w-10 items-center justify-center">
        <svg viewBox="0 0 14 13" className="h-[13px] w-[14px]" fill="none" stroke="#222"><path d="M.5.5h13v12H.5zM4.500.5v7h5v-7M9.500 7.500h4" /></svg>
      </button>
      <button aria-label="縮小" className="ml-[6px]">
        <svg viewBox="0 0 8 8" className="size-2" stroke="#333"><path d="M0 3.500h8" /></svg>
      </button>
      <input
        type="range"
        aria-label="ズーム"
        defaultValue={50}
        className="mx-[5px] h-px w-[100px] appearance-none bg-[#666] [&::-webkit-slider-thumb]:h-[11px] [&::-webkit-slider-thumb]:w-[5px] [&::-webkit-slider-thumb]:appearance-none [&::-webkit-slider-thumb]:bg-[#606060]"
      />
      <button aria-label="拡大">
        <svg viewBox="0 0 8 8" className="size-2" stroke="#333"><path d="M0 4.500h8M4.500 0v8" /></svg>
      </button>
      <span className="mr-5 w-[46px] text-right">100%</span>
    </div>
  </footer>
);

const App = () => {
  return (
    <div className="flex h-screen flex-col overflow-hidden border-x border-b border-[#107c41] bg-[#efefef] font-['Noto_Sans','Noto_Sans_CJK_JP',sans-serif] text-xs text-[#262626] [font-feature-settings:'palt']">
      <TitleBar />
      <MenuBar />
      <Ribbon />
      <FormulaBar />
      <Sheet />
      <SheetTabs />
      <StatusBar />
    </div>
  );
};

export default App;
